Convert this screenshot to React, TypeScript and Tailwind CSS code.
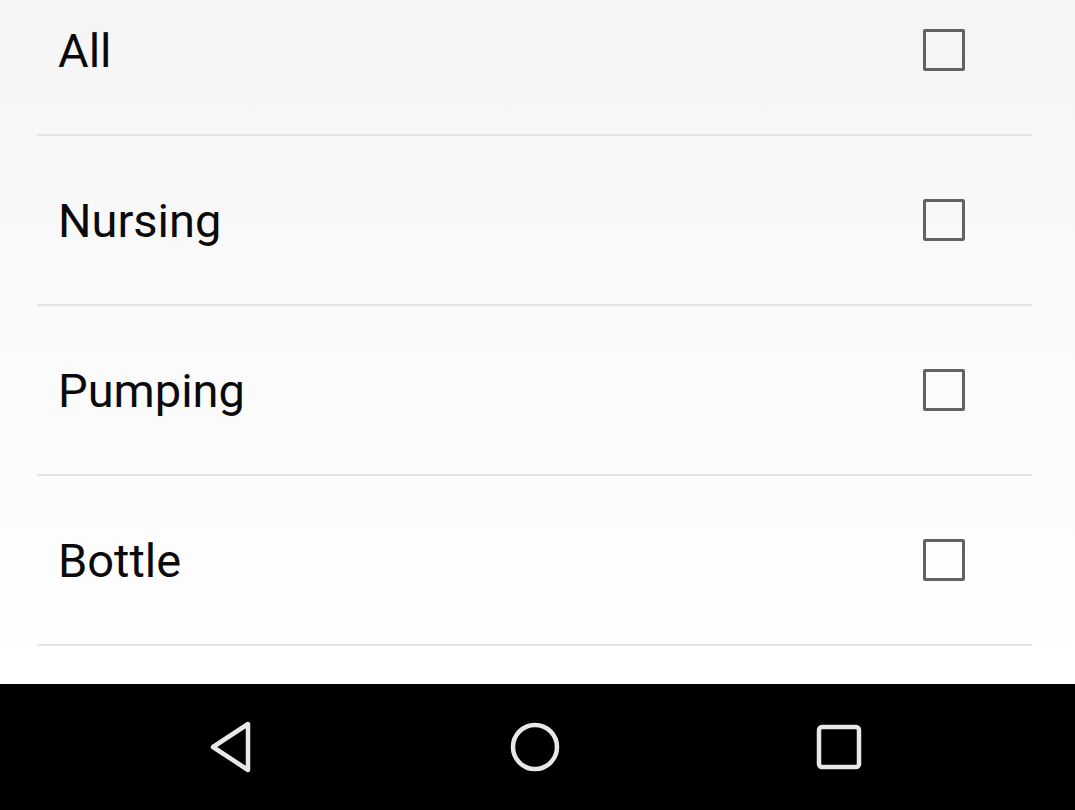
import React from 'react';

const items = ['All', 'Nursing', 'Pumping', 'Bottle'];

function Row({ label }: { label: string }) {
  return (
    <div className="ml-[37px] mr-[43px]">
      <div className="flex h-[168px] items-center justify-between pl-[21px] pr-[67px]">
        <span className="pt-[1px] text-[47px] leading-none text-[#0a0a0a]">{label}</span>
        <div className="h-[42px] w-[42px] rounded-[2px] border-[3px] border-[#626262]" />
      </div>
      <div className="h-[2px] bg-[#e4e4e4]" />
    </div>
  );
}

export default function App() {
  return (
    <div
      className="flex h-[810px] w-[1075px] flex-col overflow-hidden"
      style={{ fontFamily: 'Roboto, "Liberation Sans", sans-serif' }}
    >
      <div className="h-[684px] overflow-hidden bg-gradient-to-b from-[#f5f5f5] to-[#ffffff]">
        <div className="-mt-[34px]">
          {items.map((label) => (
            <Row key={label} label={label} />
          ))}
        </div>
      </div>

      {/* navigation bar */}
      <div className="flex h-[126px] items-center justify-center bg-black">
        <div className="flex w-[303px] justify-center pr-[6px]">
          <svg width="48" height="54" viewBox="0 0 48 54" fill="none">
            <path
              d="M40 4 L40 50 L5 27 Z"
              stroke="#e8e8e8"
              strokeWidth="4.5"
              strokeLinejoin="round"
            />
          </svg>
        </div>
        <div className="flex w-[303px] justify-center pr-[5px]">
          <svg width="52" height="52" viewBox="0 0 52 52" fill="none">
            <circle cx="26" cy="26" r="22" stroke="#e8e8e8" strokeWidth="4.5" />
          </svg>
        </div>
        <div className="flex w-[303px] justify-center pr-[4px]">
          <svg width="46" height="46" viewBox="0 0 46 46" fill="none">
            <rect x="3" y="3" width="40" height="40" rx="3" stroke="#e8e8e8" strokeWidth="4.5" />
          </svg>
        </div>
      </div>
    </div>
  );
}
